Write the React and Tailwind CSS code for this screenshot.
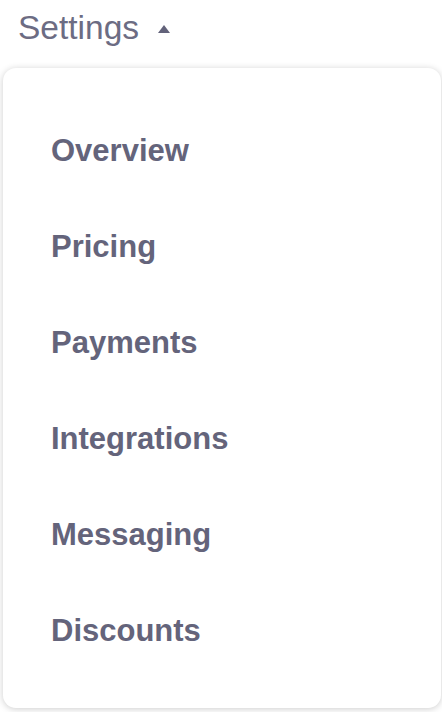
import React from 'react';

const items = ['Overview', 'Pricing', 'Payments', 'Integrations', 'Messaging', 'Discounts'];

const App = () => {
    return (
        <div className="w-[442px] h-[712px] bg-white overflow-hidden" style={{ fontFamily: '"Liberation Sans", Arial, sans-serif' }}>
            <div className="flex items-center pt-2 pl-[18px] h-[40px] box-content">
                <span className="text-[33.5px] leading-[40px] text-[#6c6c83]">Settings</span>
                <svg className="ml-[19px] mt-[1px]" width="12" height="8" viewBox="0 0 12 8">
                    <path d="M6 0 L12 8 L0 8 Z" fill="#62627a" />
                </svg>
            </div>
            <div className="mt-[20px] ml-[3px] w-[438px] h-[640px] bg-white rounded-[13px] shadow-[0_1px_7px_rgba(0,0,0,0.2)] pt-[35px]">
                {items.map(item => (
                    <div key={item} className="h-[96px] pl-[48px] text-[31px] leading-[96px] font-bold text-[#64647b]">
                        {item}
                    </div>
                ))}
            </div>
        </div>
    );
};

export default App;
